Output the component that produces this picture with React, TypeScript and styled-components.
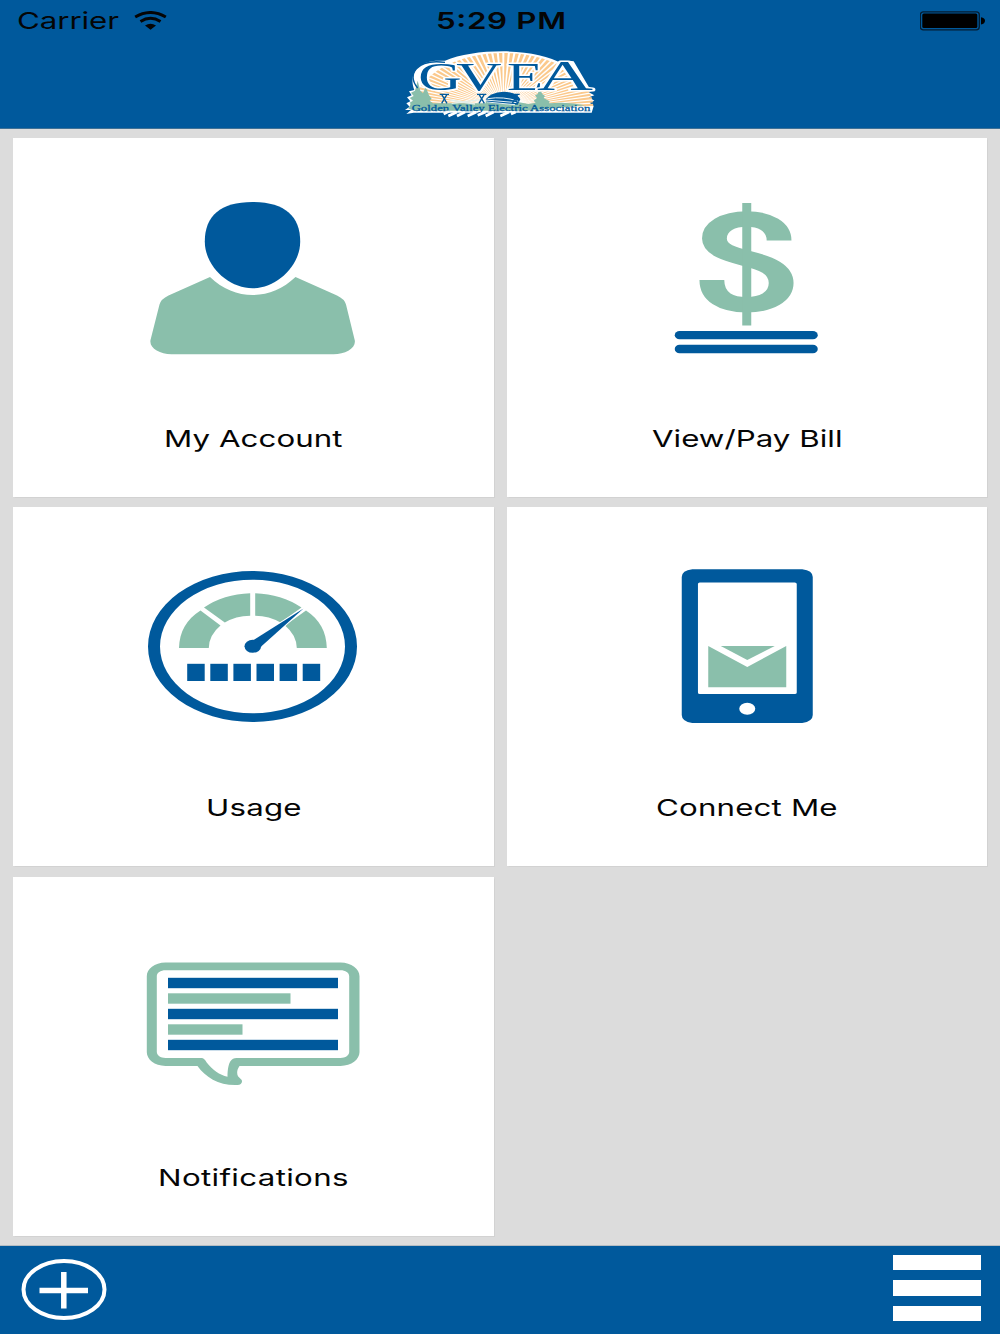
import React from "react";
import styled, { createGlobalStyle } from "styled-components";

const BLUE = "#00599c";
const GREEN = "#8abfab";
const GREY = "#dcdcdc";

const GlobalStyle = createGlobalStyle`
  * { box-sizing: border-box; }
  body { margin: 0; background: ${GREY}; }
`;

const Screen = styled.div`
  width: 1000px;
  height: 1334px;
  display: flex;
  flex-direction: column;
  background: ${GREY};
  font-family: Inter, Roboto, "Liberation Sans", sans-serif;
  color: #050505;
  overflow: hidden;
`;

const Header = styled.header`
  height: 128.5px;
  flex: none;
  display: flex;
  flex-direction: column;
  align-items: center;
  background: ${BLUE};
  border-bottom: 1px solid #3f7196;
`;

const StatusBar = styled.div`
  width: 100%;
  height: 40px;
  flex: none;
  display: grid;
  grid-template-columns: 1fr auto 1fr;
  align-items: center;
  padding: 1px 14px 0 16.5px;
`;

const StatusSide = styled.div<{ $end?: boolean }>`
  display: flex;
  align-items: center;
  justify-content: ${(p) => (p.$end ? "flex-end" : "flex-start")};
  gap: 15.5px;
`;

const WideText = styled.svg<{ $weight?: number }>`
  display: block;
  flex: none;
  overflow: visible;
  font-size: 23.5px;
  font-weight: ${(p) => p.$weight ?? 400};
`;

const Tiles = styled.main`
  flex: 1;
  display: grid;
  grid-template-columns: 480.5px 480.5px;
  grid-auto-rows: 359px;
  column-gap: 13px;
  row-gap: 10.4px;
  padding: 9.5px 13px 0;
  align-content: start;
`;

const Tile = styled.button`
  display: flex;
  flex-direction: column;
  align-items: center;
  justify-content: flex-start;
  padding: 50px 0 0;
  border: 0;
  background: #fff;
  box-shadow: 0 0 1px 0.5px #d2d2d2;
  font: inherit;
  color: inherit;
`;

const TileIcon = styled.svg`
  width: 240px;
  height: 180px;
  flex: none;
  display: block;
  margin-bottom: 57px;
`;

const Footer = styled.footer`
  height: 88.5px;
  flex: none;
  display: flex;
  align-items: flex-start;
  justify-content: space-between;
  padding: 9px 19px 0 21px;
  background: ${BLUE};
  box-shadow: 0 -1px 0 #b4bcc2;
`;

const AddIcon = styled.svg`
  width: 86px;
  height: 62px;
  margin-top: 4px;
`;

const Menu = styled.div`
  width: 88px;
  display: grid;
  row-gap: 10px;
`;

const MenuBar = styled.span`
  height: 15.5px;
  background: #fff;
`;

const Logo = styled.svg`
  width: 210px;
  height: 88px;
  flex: none;
`;

function StretchedText({ text, width, weight }: { text: string; width: number; weight?: number }) {
  return (
    <WideText width={width} height={28} $weight={weight}>
      <text
        transform="scale(1.33 1)"
        x={0}
        y={22}
        textLength={width / 1.33}
        lengthAdjust="spacing"
        fill="currentColor"
      >
        {text}
      </text>
    </WideText>
  );
}

function Rays() {
  const count = 50;
  const rays = [];
  for (let i = 0; i < count; i++) {
    const a = Math.PI * (1.02 + (0.96 * i) / (count - 1));
    const w = 0.019;
    const pt = (t: number, r: number) => `${325 + 270 * r * Math.cos(t)},${205 + 166 * r * Math.sin(t)}`;
    rays.push(
      <polygon key={i} fill="#fbc98c" points={`${pt(a, 0.22)} ${pt(a - w, 1)} ${pt(a + w, 1)}`} />
    );
  }
  return <>{rays}</>;
}

function GveaLogo() {
  return (
    <Logo viewBox="0 0 630 264">
      <path
        d="M58 150C40 104 66 66 122 62H150C195 44 255 34 325 34C400 34 460 48 505 72L524 62L536 64L582 142L603 150L580 156L598 166L582 172L598 182L584 188L596 198L590 218H56L34 222L48 210L30 210L44 200L34 190L46 184L36 172L50 166L42 154Z"
        fill="#fff"
      />
      <Rays />
      <path
        d="M40 206Q50 192 44 188L54 182L44 174L56 168L48 158L60 152L68 122L76 152L84 160L92 140L102 166L110 176L104 182L114 190H272V184Q330 176 400 192L422 188L416 182L426 174L420 166L428 162L434 146L442 162L450 168L446 174L464 184L462 190Q520 184 570 196L400 212H60Z"
        fill={GREEN}
      />
      <path d="M272 178Q284 158 326 155Q364 157 376 178L368 194L278 188Z" fill={BLUE} />
      <path d="M278 176Q326 168 370 184M276 186L360 194M270 180L368 188" stroke="#e8f2f4" strokeWidth="3" fill="none" />
      <path d="M166 180L240 192M170 190L262 178" stroke="#e3eee9" strokeWidth="4" />
      {[148, 260, 360].map((x) => (
        <path
          key={x}
          d={`M${x - 14} 163H${x + 14}M${x - 8} 163L${x + 8} 190M${x + 8} 163L${x - 8} 190`}
          stroke={BLUE}
          strokeWidth="4"
          fill="none"
        />
      ))}
      <g
        fontFamily='"Liberation Serif", serif'
        fill={BLUE}
        stroke="#fff"
        strokeWidth="9"
        paintOrder="stroke"
        strokeLinejoin="round"
      >
        <text x="70" y="150" fontSize="122" textLength="130" lengthAdjust="spacingAndGlyphs">G</text>
        <text x="184" y="150" fontSize="122" textLength="136" lengthAdjust="spacingAndGlyphs">V</text>
        <text x="336" y="150" fontSize="122" textLength="108" lengthAdjust="spacingAndGlyphs">E</text>
        <text x="426" y="150" fontSize="126" textLength="168" lengthAdjust="spacingAndGlyphs">A</text>
      </g>
      <path d="M150 67C64 56 34 104 68 144" fill="none" stroke={BLUE} strokeWidth="4" />
      <text
        x="50"
        y="213"
        fontFamily='"Liberation Serif", serif'
        fontSize="26"
        fill={BLUE}
        stroke={BLUE}
        strokeWidth="0.8"
        textLength="536"
        lengthAdjust="spacingAndGlyphs"
      >
        Golden Valley Electric Association
      </text>
      <path
        d="M146 222L162 214M160 228L186 216M186 228L210 216M218 228L244 216M248 226L272 216M272 228L296 216M316 228L342 216M348 222L362 216"
        stroke="#fff"
        strokeWidth="8"
      />
    </Logo>
  );
}

function WifiIcon() {
  return (
    <svg width="33" height="19" viewBox="0 0 33 19">
      <g fill="none" stroke="#050505" strokeWidth="3">
        <path d="M1.2 6Q16.500 -3 31.800 6" />
        <path d="M6.500 10.500Q16.500 4.200 26.500 10.500" />
      </g>
      <path d="M11 14.500Q16.500 10.800 22 14.500L16.500 18.700Z" fill="#050505" />
    </svg>
  );
}

function BatteryIcon() {
  return (
    <svg width="66" height="20" viewBox="0.500 0 66 20">
      <rect x="0.8" y="0.8" width="59" height="18" rx="3" fill="none" stroke="#041c30" strokeWidth="1.300" />
      <rect x="2.800" y="2.500" width="55" height="14.600" rx="1.500" fill="#000" />
      <path d="M61.500 6.200Q65.500 6.800 65.500 9.800T61.500 13.400Z" fill="#000" />
    </svg>
  );
}

const tiles = [
  {
    label: "My Account",
    width: 178.5,
    box: "133.500 188 240 180",
    art: (
      <>
        <path
          d="M253 202C285 202 300.700 216 300.700 241.500C300.700 266 277 288.300 253 288.300C229 288.300 205.300 266 205.300 241.500C205.300 216 221 202 253 202Z"
          fill={BLUE}
        />
        <path
          d="M210.500 277L169 295.500Q161.500 299 160 304.500L151 340C149.500 348 160 354.200 172 354.200H334C346 354.200 357 348 355.200 340L346.500 304.500Q345 299 337.500 295.500L296 277C271 301 235.500 301 210.500 277Z"
          fill={GREEN}
        />
      </>
    ),
  },
  {
    label: "View/Pay Bill",
    width: 190.5,
    box: "626.750 188 240 180",
    art: (
      <>
        <path
          transform="translate(746.500 0) scale(1.600 1)"
          d="M20.200 240.500C20.200 226 11 219 0 219C-12 219 -20.200 227 -20.200 238.500C-20.200 250 -10 254.500 0 258.500C12 263 21.500 269 21.500 283C21.500 297 12 304.700 0 304.700C-13 304.700 -21.800 297 -21.800 280"
          fill="none"
          stroke={GREEN}
          strokeWidth="15.500"
        />
        <rect x="742" y="203" width="9" height="122.500" fill={GREEN} />
        <rect x="674.500" y="331" width="143" height="8.300" rx="4.800" fill={BLUE} />
        <rect x="674.500" y="344.800" width="143" height="8.500" rx="4.800" fill={BLUE} />
      </>
    ),
  },
  {
    label: "Usage",
    width: 95.5,
    box: "133.500 557 240 180",
    art: (
      <>
        <path
          fillRule="evenodd"
          fill={BLUE}
          d="M148.500 646.500A104.500 75.500 0 1 1 357.500 646.500A104.500 75.500 0 1 1 148.500 646.500ZM160.500 646.500A92.500 66.800 0 1 0 345.500 646.500A92.500 66.800 0 1 0 160.500 646.500Z"
        />
        <path d="M179.500 648C180 632 187 619 201 610.500L221 625.500Q209.500 635 209.300 648Z" fill={GREEN} />
        <path d="M204.500 607.500Q224 594 250.700 593.200V615.700Q236 616 225.300 622.500Z" fill={GREEN} />
        <path d="M255.700 593.200Q282 594 302 607.500L281 622.500Q270 616 255.700 615.700Z" fill={GREEN} />
        <path d="M306.500 610.500C320 619 327 632 327.300 648H297.300Q297 635 285.500 625.500Z" fill={GREEN} />
        <path d="M254 640L304 608.500L260 648Z" fill={BLUE} stroke="#fff" strokeWidth="2" paintOrder="stroke" />
        <ellipse cx="253.300" cy="646.300" rx="8.300" ry="6.500" fill={BLUE} />
        {[0, 1, 2, 3, 4, 5].map((i) => (
          <rect key={i} x={187.7 + i * 23.1} y="663.800" width="17.500" height="17.200" fill={BLUE} />
        ))}
      </>
    ),
  },
  {
    label: "Connect Me",
    width: 181.5,
    box: "626.750 557 240 180",
    art: (
      <>
        <path
          fillRule="evenodd"
          fill={BLUE}
          d="M692 569.200H802Q812.500 570.500 812.500 577V715Q812.500 721.500 802 723H692Q681.500 721.500 681.500 715V577Q681.500 570.500 692 569.200ZM699.500 582.500Q697.700 582.500 697.700 584V692.500Q697.700 694 699.500 694H794.500Q796.500 694 796.500 692.500V584Q796.500 582.500 794.500 582.500Z"
        />
        <ellipse cx="747" cy="708.700" rx="8" ry="6" fill="#fff" />
        <path d="M708 646L747 667L786 646V687.200H708Z" fill={GREEN} />
        <path d="M720.500 646H774.500L747 660Z" fill={GREEN} />
      </>
    ),
  },
  {
    label: "Notifications",
    width: 190.5,
    box: "133.500 926.700 240 180",
    art: (
      <>
        <path
          fillRule="evenodd"
          fill={GREEN}
          d="M166 962.300H341C352 962.300 360 969 360 976V1052C360 1059 352 1065.600 341 1065.600H240C237.500 1069 237 1073 238.500 1076L242 1079.500C243.500 1082 241.500 1084.500 238 1084.700C220 1085.500 206 1077 198 1065.600H166C155 1065.600 147.300 1059 147.300 1052V976C147.300 969 155 962.300 166 962.300ZM166 970C161 970 157.300 972.500 157.300 976V1051.500C157.300 1055 161 1057.700 166 1057.700H202Q205 1057.800 207 1062C213 1070 220 1074.500 228 1076.500C228 1069 229 1061 233.500 1058.500Q235 1057.700 237 1057.700H341C346 1057.700 349.700 1055 349.700 1051.500V976C349.700 972.500 346 970 341 970Z"
        />
        {[
          { y: 977.5, w: 170, fill: BLUE },
          { y: 993, w: 122.5, fill: GREEN },
          { y: 1008.5, w: 170, fill: BLUE },
          { y: 1024, w: 74.5, fill: GREEN },
          { y: 1039.5, w: 170, fill: BLUE },
        ].map((line) => (
          <rect key={line.y} x="168.500" y={line.y} width={line.w} height="10.400" fill={line.fill} />
        ))}
      </>
    ),
  },
];

export default function App() {
  return (
    <Screen>
      <GlobalStyle />
      <Header>
        <StatusBar>
          <StatusSide>
            <StretchedText text="Carrier" width={102} />
            <WifiIcon />
          </StatusSide>
          <StretchedText text="5:29 PM" width={130} weight={600} />
          <StatusSide $end>
            <BatteryIcon />
          </StatusSide>
        </StatusBar>
        <GveaLogo />
      </Header>
      <Tiles>
        {tiles.map((t) => (
          <Tile key={t.label}>
            <TileIcon viewBox={t.box}>{t.art}</TileIcon>
            <StretchedText text={t.label} width={t.width} />
          </Tile>
        ))}
      </Tiles>
      <Footer>
        <AddIcon viewBox="0 0 86 62">
          <ellipse cx="43" cy="30.500" rx="40.500" ry="28.500" fill="none" stroke="#fff" strokeWidth="4" />
          <path d="M18.500 31.500H67M42.800 13V49.500" stroke="#fff" strokeWidth="5.500" />
        </AddIcon>
        <Menu>
          <MenuBar />
          <MenuBar />
          <MenuBar />
        </Menu>
      </Footer>
    </Screen>
  );
}
